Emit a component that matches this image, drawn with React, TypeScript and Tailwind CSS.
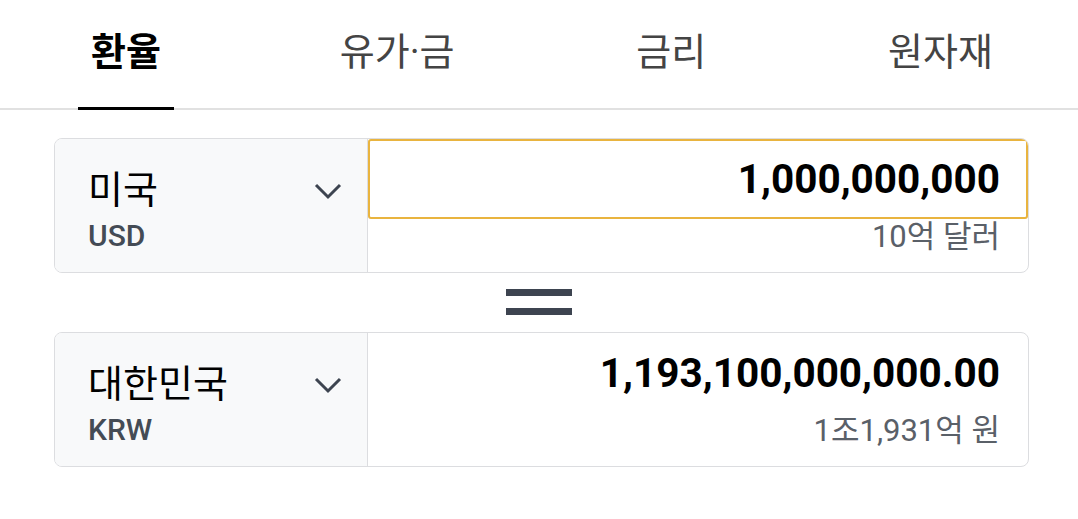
import React from 'react';

const tabs = ['환율', '유가·금', '금리', '원자재'];

function Chevron() {
  return (
    <svg width="28" height="17" viewBox="0 0 28 17" fill="none" className="mt-[4px] shrink-0">
      <polyline points="2,2 14,14 26,2" stroke="#3d4450" strokeWidth="3" />
    </svg>
  );
}

interface RowProps {
  country: string;
  code: string;
  amount: string;
  words: string;
  focused?: boolean;
}

function CurrencyRow({ country, code, amount, words, focused }: RowProps) {
  return (
    <div className="flex h-[135px] w-[975px] overflow-hidden rounded-[8px] border border-[#dcdde0]">
      <div className="flex w-[313px] shrink-0 justify-between border-r border-[#dcdde0] bg-[#f8f9fa] pl-[33px] pr-[25px] pt-[29px]">
        <div className="flex flex-col">
          <span className="text-[38px] leading-[44px] text-black">{country}</span>
          <span className="mt-[7px] text-[30px] font-medium leading-[34px] text-[#444b55]">{code}</span>
        </div>
        <div className="pt-[11px]">
          <Chevron />
        </div>
      </div>
      <div className="flex flex-1 flex-col">
        <div
          className={
            focused
              ? 'flex h-[80px] items-center justify-end rounded-[3px] border-2 border-[#e9b43f] pr-[26px]'
              : 'flex h-[80px] items-center justify-end border-2 border-transparent pr-[26px]'
          }
        >
          <span className="text-[40.5px] font-bold leading-none text-black">{amount}</span>
        </div>
        <div className="pr-[28px] text-right text-[31px] leading-[36px] text-[#5a6068]">{words}</div>
      </div>
    </div>
  );
}

export default function App() {
  return (
    <div
      className="h-[519px] w-[1078px] bg-white"
      style={{ fontFamily: "Roboto, 'Noto Sans CJK KR', sans-serif" }}
    >
      <nav className="flex h-[110px] justify-between border-b-2 border-[#e1e1e1] pl-[78px] pr-[69px]">
        {tabs.map((t, i) => (
          <div
            key={t}
            className={
              i === 0
                ? 'mb-[-2px] flex items-center border-b-[3px] border-black px-[13px] pb-[3px] text-[38px] font-bold text-black'
                : 'flex items-center px-[16px] pb-[4px] text-[38px] text-[#444444]'
            }
          >
            {t}
          </div>
        ))}
      </nav>

      <div className="flex flex-col px-[54px] pt-[28px]">
        <CurrencyRow country="미국" code="USD" amount="1,000,000,000" words="10억 달러" focused />
        <div className="flex h-[59px] flex-col items-center justify-center gap-[12px] pb-[2px]">
          <div className="h-[7px] w-[66px] bg-[#3d4450]" />
          <div className="h-[7px] w-[66px] bg-[#3d4450]" />
        </div>
        <CurrencyRow country="대한민국" code="KRW" amount="1,193,100,000,000.00" words="1조1,931억 원" />
      </div>
    </div>
  );
}
